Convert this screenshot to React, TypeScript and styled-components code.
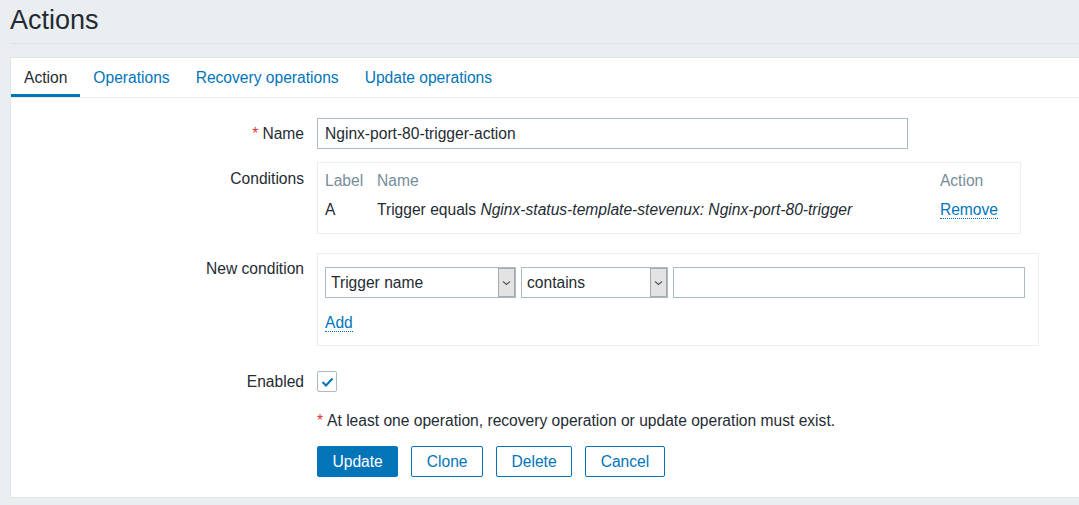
import React from "react";
import styled, { createGlobalStyle } from "styled-components";

const Global = createGlobalStyle`
  html, body { margin: 0; padding: 0; background: #ebeef0; overflow: hidden; }
  body { font-family: "Liberation Sans", Arial, sans-serif; font-size: 15.6px; color: #1f2c33; }
  * { box-sizing: border-box; }
`;

const Page = styled.div`
  width: 1079px;
  height: 505px;
  background: #ebeef0;
`;

const Header = styled.header`
  margin-left: 10px;
  padding-top: 4px;
  padding-bottom: 7px;
  border-bottom: 1px solid #dde2e5;
`;

const Title = styled.h1`
  margin: 0;
  font-size: 27px;
  font-weight: normal;
  line-height: 32px;
  color: #1f2c33;
`;

const Panel = styled.section`
  margin: 13px 0 0 10px;
  background: #fff;
  border: 1px solid #dfe4e7;
  border-right: none;
  padding-bottom: 20px;
`;

const TabBar = styled.nav`
  display: flex;
  border-bottom: 1px solid #ebeef0;
`;

const Tab = styled.a<{ $active?: boolean }>`
  display: block;
  height: 39px;
  padding: 3px 13px 0;
  line-height: 34px;
  color: ${(p) => (p.$active ? "#1f2c33" : "#0275b8")};
  border-bottom: 3px solid ${(p) => (p.$active ? "#0275b8" : "transparent")};
  cursor: pointer;
`;

const Form = styled.div`
  padding-top: 20px;
`;

const Row = styled.div<{ $mb: number }>`
  display: grid;
  grid-template-columns: 293px 1fr;
  column-gap: 13px;
  align-items: start;
  margin-bottom: ${(p) => p.$mb}px;
`;

const Label = styled.div<{ $pt: number }>`
  text-align: right;
  line-height: 20px;
  padding-top: ${(p) => p.$pt}px;
`;

const Req = styled.span`
  color: #e33734;
  margin-right: 4px;
`;

const TextInput = styled.div<{ $w: number }>`
  width: ${(p) => p.$w}px;
  height: 31px;
  border: 1px solid #acbbc2;
  padding: 0 7px;
  line-height: 29px;
  background: #fff;
`;

const Box = styled.div<{ $w: number }>`
  width: ${(p) => p.$w}px;
  border: 1px solid #ebeef0;
`;

const CondTable = styled.div`
  display: grid;
  grid-template-columns: 52px 1fr auto;
  padding: 8px 22px 13px 7px;
  line-height: 20px;
`;

const Th = styled.div`
  color: #768d99;
`;

const Td = styled.div`
  padding-top: 9px;
`;

const Link = styled.a`
  color: #0275b8;
  border-bottom: 1px dotted #0275b8;
  cursor: pointer;
`;

const NewCondInner = styled.div`
  padding: 13px 12px 12px 7px;
`;

const Controls = styled.div`
  display: flex;
  gap: 5px;
  margin-bottom: 15px;
`;

const Select = styled.div<{ $w: number }>`
  width: ${(p) => p.$w}px;
  height: 31px;
  display: flex;
  border: 1px solid #acbbc2;
  background: #fff;
`;

const SelectText = styled.div`
  flex: 1;
  padding-left: 5px;
  line-height: 29px;
`;

const Arrow = styled.div`
  width: 17px;
  display: flex;
  align-items: center;
  justify-content: center;
  background: #e3e3e3;
  border: 1px solid #a9a9a9;
`;

const AddLine = styled.div`
  line-height: 20px;
`;

const Check = styled.div`
  width: 20px;
  height: 21px;
  border: 1px solid #acbbc2;
  border-radius: 2px;
  display: flex;
  align-items: center;
  justify-content: center;
  background: #fff;
`;

const Note = styled.div`
  line-height: 20px;
`;

const Buttons = styled.div`
  display: flex;
  gap: 13px;
`;

const Button = styled.button<{ $primary?: boolean }>`
  height: 31px;
  padding: 0 14.5px;
  font-family: "Liberation Sans", Arial, sans-serif;
  font-size: 15.6px;
  border-radius: 2px;
  border: 1px solid #0275b8;
  background: ${(p) => (p.$primary ? "#0275b8" : "#fff")};
  color: ${(p) => (p.$primary ? "#fff" : "#0275b8")};
  cursor: pointer;
`;

const Chevron = () => (
  <svg width="9" height="6" viewBox="0 0 9 6">
    <path d="M1 1.5 L4.5 4.5 L8 1.5" fill="none" stroke="#555" strokeWidth="1.1" />
  </svg>
);

const Tick = () => (
  <svg width="13" height="10" viewBox="0 0 13 10">
    <path d="M1.5 5 L5 8.5 L11.5 1.5" fill="none" stroke="#0275b8" strokeWidth="2" />
  </svg>
);

export default function App() {
  return (
    <Page>
      <Global />
      <Header>
        <Title>Actions</Title>
      </Header>
      <Panel>
        <TabBar>
          <Tab $active>Action</Tab>
          <Tab>Operations</Tab>
          <Tab>Recovery operations</Tab>
          <Tab>Update operations</Tab>
        </TabBar>
        <Form>
          <Row $mb={13}>
            <Label $pt={6}>
              <Req>*</Req>Name
            </Label>
            <TextInput $w={591}>Nginx-port-80-trigger-action</TextInput>
          </Row>
          <Row $mb={19}>
            <Label $pt={7}>Conditions</Label>
            <Box $w={704}>
              <CondTable>
                <Th>Label</Th>
                <Th>Name</Th>
                <Th>Action</Th>
                <Td>A</Td>
                <Td>
                  Trigger equals <i>Nginx-status-template-stevenux: Nginx-port-80-trigger</i>
                </Td>
                <Td>
                  <Link>Remove</Link>
                </Td>
              </CondTable>
            </Box>
          </Row>
          <Row $mb={25}>
            <Label $pt={6}>New condition</Label>
            <Box $w={722}>
              <NewCondInner>
                <Controls>
                  <Select $w={191}>
                    <SelectText>Trigger name</SelectText>
                    <Arrow>
                      <Chevron />
                    </Arrow>
                  </Select>
                  <Select $w={147}>
                    <SelectText>contains</SelectText>
                    <Arrow>
                      <Chevron />
                    </Arrow>
                  </Select>
                  <TextInput $w={352} />
                </Controls>
                <AddLine>
                  <Link>Add</Link>
                </AddLine>
              </NewCondInner>
            </Box>
          </Row>
          <Row $mb={19}>
            <Label $pt={1}>Enabled</Label>
            <Check>
              <Tick />
            </Check>
          </Row>
          <Row $mb={15}>
            <div />
            <Note>
              <Req>*</Req>At least one operation, recovery operation or update operation must exist.
            </Note>
          </Row>
          <Row $mb={0}>
            <div />
            <Buttons>
              <Button $primary>Update</Button>
              <Button>Clone</Button>
              <Button>Delete</Button>
              <Button>Cancel</Button>
            </Buttons>
          </Row>
        </Form>
      </Panel>
    </Page>
  );
}
